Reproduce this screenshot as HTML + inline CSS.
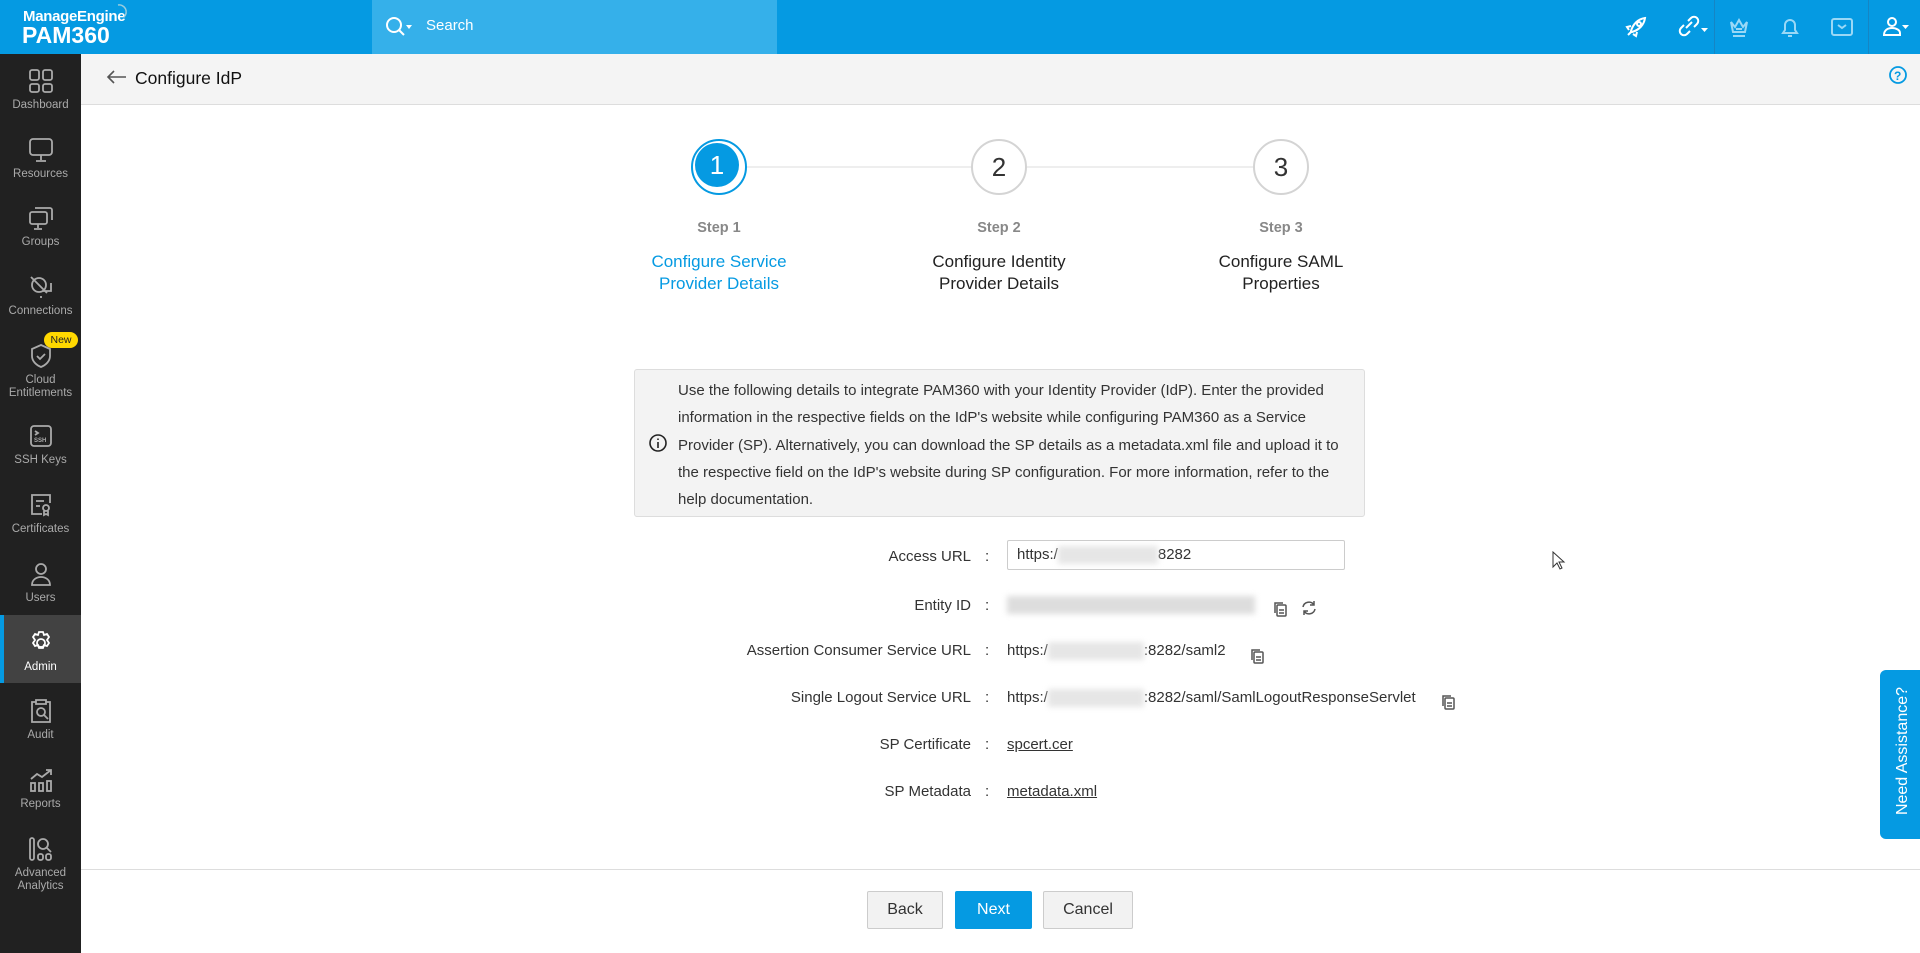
<!DOCTYPE html>
<html><head><meta charset="utf-8"><style>
*{box-sizing:border-box;margin:0;padding:0}
body{width:1920px;height:953px;overflow:hidden;font-family:"Liberation Sans",sans-serif;background:#fff;position:relative;color:#333}
.top{position:absolute;left:0;top:0;width:1920px;height:54px;background:#059ae2}
.logo1{position:absolute;left:23px;top:8px;color:#fff;font-size:15px;font-weight:bold;letter-spacing:-0.3px}
.logo2{position:absolute;left:22px;top:22px;color:#fff;font-size:23px;font-weight:bold}
.search{position:absolute;left:372px;top:0;width:405px;height:54px;background:#35b0ea}
.search span{position:absolute;left:54px;top:17px;color:#fff;font-size:15px}
.ti{position:absolute;top:14px}
.sep{position:absolute;top:0;width:1px;height:54px;background:#1585c4}
.side{position:absolute;left:0;top:54px;width:81px;height:899px;background:#212121}
.si{position:absolute;left:0;width:81px;text-align:center;color:#aaa;font-size:11.5px;line-height:13px}
.si svg{display:block;margin:0 auto 5px}
.hdr{position:absolute;left:81px;top:54px;width:1839px;height:51px;background:#f4f4f4;border-bottom:1px solid #ddd}
.hdr .t{position:absolute;left:54px;top:14px;font-size:17.5px;color:#111}
.circ{position:absolute;width:56px;height:56px;border-radius:50%;border:2px solid #d4d4d4;background:#fff;text-align:center;line-height:52px;font-size:26px;color:#333}
.line{position:absolute;top:166px;height:2px;background:#eee}
.sl{position:absolute;top:220px;width:240px;text-align:center;font-size:14.5px;font-weight:bold;color:#888}
.st{position:absolute;top:251px;width:240px;text-align:center;font-size:17px;line-height:22px;color:#222}
.info{position:absolute;left:634px;top:369px;width:731px;height:148px;background:#f3f3f3;border:1px solid #ddd;border-radius:3px}
.info p{position:absolute;left:43px;top:7px;width:680px;font-size:15px;line-height:27.3px;color:#333}
.lab{position:absolute;right:949px;font-size:15px;color:#333;text-align:right;white-space:nowrap}
.col{position:absolute;left:985px;font-size:15px}
.val{position:absolute;left:1007px;font-size:15px;color:#333;white-space:nowrap}
.blur{display:inline-block;height:18px;background:#e6e6e6;vertical-align:middle;filter:blur(3px)}
.btn{position:absolute;top:891px;height:38px;border:1px solid #ccc;background:#f2f2f2;border-radius:2px;font-size:16px;text-align:center;line-height:36px;color:#333}
</style></head><body>
<div class="top">
<div class="logo1">ManageEngine</div><div class="logo2">PAM360</div>
<svg style="position:absolute;left:112px;top:2px" width="20" height="20"><path d="M6 3a7 7 0 0 1 6 12" stroke="#9cd" stroke-width="1.5" fill="none"/></svg>
<div class="search"><svg style="position:absolute;left:12px;top:15px" width="30" height="24"><circle cx="10" cy="10" r="7" stroke="#fff" stroke-width="2" fill="none"/><path d="M15 15l5 5" stroke="#fff" stroke-width="2"/><path d="M22 10h6l-3 4z" fill="#fff"/></svg><span>Search</span></div>
<svg class="ti" style="left:1623px" width="26" height="26" fill="none" stroke="#fff" stroke-width="2"><path d="M8 17C10 10 15 5 22 4 21 11 16 16 9 18zM8 12l-4 1 2 3M14 18l-1 4-3-2M5 21l3-3"/><circle cx="16" cy="10" r="2"/></svg>
<svg class="ti" style="left:1676px" width="34" height="26" fill="none" stroke="#fff" stroke-width="2"><path d="M10 14l6-6M8 11l-3 3a4 4 0 0 0 6 6l3-3M18 13l3-3a4 4 0 0 0-6-6l-3 3"/><path d="M25 14h7l-3.5 4z" fill="#fff" stroke="none"/></svg>
<div class="sep" style="left:1714px"></div>
<svg class="ti" style="left:1726px" width="26" height="26" fill="none" stroke="#9ad8f6" stroke-width="2"><path d="M5 8l4 5 4-7 4 7 4-5-2 10H7zM7 22h12M10 15h6"/></svg>
<svg class="ti" style="left:1777px" width="26" height="26" fill="none" stroke="#9ad8f6" stroke-width="2"><path d="M6 19h14l-2-3v-5a5 5 0 0 0-10 0v5zM11 22h4"/></svg>
<svg class="ti" style="left:1829px" width="26" height="26" fill="none" stroke="#9ad8f6" stroke-width="2"><rect x="3" y="5" width="20" height="16" rx="2"/><path d="M9 11l4 3 4-3"/></svg>
<div class="sep" style="left:1868px"></div>
<svg class="ti" style="left:1881px" width="30" height="26" fill="none" stroke="#fff" stroke-width="2"><circle cx="11" cy="8" r="4"/><path d="M3 21c0-5 4-7 8-7s8 2 8 5v2z"/><path d="M21 11h7l-3.5 4z" fill="#fff" stroke="none"/></svg>
</div>
<div class="side">
<div class="si" style="top:14px"><svg width="26" height="26" fill="none" stroke="#aaa" stroke-width="1.8"><rect x="2" y="2" width="9" height="10" rx="2"/><rect x="15" y="2" width="9" height="10" rx="2"/><rect x="2" y="16" width="9" height="8" rx="2"/><rect x="15" y="16" width="9" height="8" rx="2"/></svg>Dashboard</div>
<div class="si" style="top:83px"><svg width="26" height="26" fill="none" stroke="#aaa" stroke-width="1.8"><rect x="2" y="2" width="22" height="16" rx="3"/><path d="M13 18v5M8 24h10"/></svg>Resources</div>
<div class="si" style="top:151px"><svg width="26" height="26" fill="none" stroke="#aaa" stroke-width="1.8"><rect x="2" y="7" width="17" height="12" rx="2"/><path d="M7 3h15a2 2 0 0 1 2 2v10M10 19v4M6 24h8"/></svg>Groups</div>
<div class="si" style="top:220px"><svg width="26" height="26" fill="none" stroke="#aaa" stroke-width="1.8"><circle cx="11" cy="11" r="7"/><path d="M3 3l16 16M15 17h8v-8M13 22v2"/></svg>Connections</div>
<div class="si" style="top:289px"><svg width="26" height="26" fill="none" stroke="#aaa" stroke-width="1.8"><path d="M13 2l9 4v7c0 5-4 9-9 11-5-2-9-6-9-11V6z"/><path d="M9 13l3 3 5-5"/></svg>Cloud<br>Entitlements</div>
<div style="position:absolute;left:44px;top:278px;width:34px;height:16px;border-radius:8px;background:#ffd800;color:#222;font-size:10.5px;text-align:center;line-height:16px">New</div>
<div class="si" style="top:369px"><svg width="26" height="26" fill="none" stroke="#aaa" stroke-width="1.8"><rect x="3" y="3" width="20" height="20" rx="3"/><text x="6" y="19" font-size="6" fill="#aaa" stroke="none" font-family="Liberation Sans" font-weight="bold">SSH</text><path d="M7 8l3 2-3 2"/></svg>SSH Keys</div>
<div class="si" style="top:438px"><svg width="26" height="26" fill="none" stroke="#aaa" stroke-width="1.8"><path d="M14 22H4V3h18v8M8 9h8M8 14h4"/><circle cx="18" cy="16" r="3"/><path d="M16 19v4l2-1 2 1v-4"/></svg>Certificates</div>
<div class="si" style="top:507px"><svg width="26" height="26" fill="none" stroke="#aaa" stroke-width="1.8"><circle cx="13" cy="8" r="5"/><path d="M4 24c0-5 4-8 9-8s9 3 9 8z"/></svg>Users</div>
<div style="position:absolute;left:0;top:561px;width:81px;height:68px;background:#424242;border-left:4px solid #059ae2"></div>
<div class="si" style="top:576px;color:#fff"><svg width="26" height="26" fill="none" stroke="#fff" stroke-width="1.8"><circle cx="13" cy="13" r="4"/><path d="M11 2h4l1 3 3-1 2 3-2 3 2 3-2 3-3-1-1 3h-4l-1-3-3 1-2-3 2-3-2-3 2-3 3 1z"/></svg>Admin</div>
<div class="si" style="top:644px"><svg width="26" height="26" fill="none" stroke="#aaa" stroke-width="1.8"><path d="M8 4H4v20h18V4h-4M8 2h10v4H8z"/><circle cx="13" cy="14" r="4"/><path d="M16 17l4 4"/></svg>Audit</div>
<div class="si" style="top:713px"><svg width="26" height="26" fill="none" stroke="#aaa" stroke-width="1.8"><path d="M3 12l6-5 5 3 9-7M18 3h5v5"/><rect x="3" y="16" width="4" height="8"/><rect x="11" y="16" width="4" height="8"/><rect x="19" y="14" width="4" height="10"/></svg>Reports</div>
<div class="si" style="top:782px"><svg width="26" height="26" fill="none" stroke="#aaa" stroke-width="1.8"><rect x="2" y="2" width="4" height="22" rx="2"/><circle cx="15" cy="8" r="5"/><path d="M19 12l4 4"/><rect x="10" y="18" width="5" height="6" rx="2"/><rect x="18" y="18" width="5" height="6" rx="2"/></svg>Advanced<br>Analytics</div>
</div>
<div class="hdr"><svg style="position:absolute;left:25px;top:15px" width="22" height="16" fill="none" stroke="#555" stroke-width="1.6"><path d="M20 8H2M8 2L2 8l6 6"/></svg><div class="t">Configure IdP</div>
<svg style="position:absolute;left:1807px;top:11px" width="20" height="20" fill="none" stroke="#059ae2" stroke-width="1.8"><circle cx="10" cy="10" r="8"/><text x="6" y="15" font-size="12" fill="#059ae2" stroke="none" font-weight="bold" font-family="Liberation Sans">?</text></svg></div>
<div class="line" style="left:747px;width:224px"></div>
<div class="line" style="left:1027px;width:226px"></div>
<div class="circ" style="left:691px;top:139px;border-color:#059ae2;padding:4px;line-height:44px"><div style="width:44px;height:44px;border-radius:50%;background:#059ae2;color:#fff;margin:-2px">1</div></div>
<div class="circ" style="left:971px;top:139px">2</div>
<div class="circ" style="left:1253px;top:139px">3</div>
<div class="sl" style="left:599px">Step 1</div><div class="sl" style="left:879px">Step 2</div><div class="sl" style="left:1161px">Step 3</div>
<div class="st" style="left:599px;color:#059ae2">Configure Service<br>Provider Details</div>
<div class="st" style="left:879px">Configure Identity<br>Provider Details</div>
<div class="st" style="left:1161px">Configure SAML<br>Properties</div>
<div class="info"><svg style="position:absolute;left:13px;top:63px" width="20" height="20" fill="none" stroke="#222" stroke-width="1.6"><circle cx="10" cy="10" r="8"/><path d="M10 9v6M10 5.5v1.5"/></svg><p>Use the following details to integrate PAM360 with your Identity Provider (IdP). Enter the provided information in the respective fields on the IdP's website while configuring PAM360 as a Service Provider (SP). Alternatively, you can download the SP details as a metadata.xml file and upload it to the respective field on the IdP's website during SP configuration. For more information, refer to the help documentation.</p></div>
<div class="lab" style="top:548px">Access URL</div><div class="col" style="top:548px">:</div>
<div style="position:absolute;left:1007px;top:540px;width:338px;height:30px;border:1px solid #ccc;border-radius:2px"></div>
<div class="val" style="top:546px;left:1017px">https:/<span class="blur" style="width:100px"></span>8282</div>
<div class="lab" style="top:597px">Entity ID</div><div class="col" style="top:597px">:</div>
<div class="val" style="top:596px"><span class="blur" style="width:248px;background:#ddd"></span></div>
<svg style="position:absolute;left:1272px;top:600px" width="16" height="18" fill="none" stroke="#555" stroke-width="1.5"><rect x="5" y="5" width="9" height="11" rx="1"/><path d="M3 13V3h8M7 10h5M7 13h5"/></svg>
<svg style="position:absolute;left:1300px;top:599px" width="18" height="18" fill="none" stroke="#555" stroke-width="1.5"><path d="M3 8a6 6 0 0 1 11-2M15 10a6 6 0 0 1-11 2M14 2v4h-4M4 16v-4h4"/></svg>
<div class="lab" style="top:642px">Assertion Consumer Service URL</div><div class="col" style="top:642px">:</div>
<div class="val" style="top:642px">https:/<span class="blur" style="width:96px"></span>:8282/saml2</div>
<svg style="position:absolute;left:1249px;top:647px" width="16" height="18" fill="none" stroke="#555" stroke-width="1.5"><rect x="5" y="5" width="9" height="11" rx="1"/><path d="M3 13V3h8M7 10h5M7 13h5"/></svg>
<div class="lab" style="top:689px">Single Logout Service URL</div><div class="col" style="top:689px">:</div>
<div class="val" style="top:689px">https:/<span class="blur" style="width:96px"></span>:8282/saml/SamlLogoutResponseServlet</div>
<svg style="position:absolute;left:1440px;top:693px" width="16" height="18" fill="none" stroke="#555" stroke-width="1.5"><rect x="5" y="5" width="9" height="11" rx="1"/><path d="M3 13V3h8M7 10h5M7 13h5"/></svg>
<div class="lab" style="top:736px">SP Certificate</div><div class="col" style="top:736px">:</div>
<div class="val" style="top:736px;text-decoration:underline">spcert.cer</div>
<div class="lab" style="top:783px">SP Metadata</div><div class="col" style="top:783px">:</div>
<div class="val" style="top:783px;text-decoration:underline">metadata.xml</div>
<div style="position:absolute;left:81px;top:869px;width:1839px;height:1px;background:#ddd"></div>
<div class="btn" style="left:867px;width:76px">Back</div>
<div class="btn" style="left:955px;width:77px;background:#059ae2;border-color:#059ae2;color:#fff">Next</div>
<div class="btn" style="left:1043px;width:90px">Cancel</div>
<div style="position:absolute;left:1880px;top:670px;width:44px;height:169px;background:#059ae2;border-radius:6px 0 0 6px"><div style="position:absolute;left:-52px;top:72px;width:150px;transform:rotate(-90deg);color:#fff;font-size:16px;text-align:center">Need Assistance?</div></div>
<svg style="position:absolute;left:1552px;top:551px" width="14" height="20"><path d="M1 1v15l4-4 3 6 2-1-3-6h5z" fill="#fff" stroke="#333"/></svg>
</body></html>
